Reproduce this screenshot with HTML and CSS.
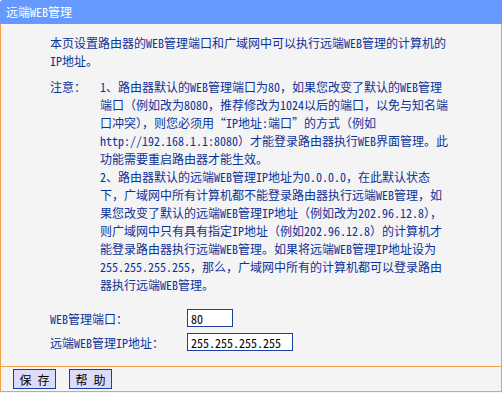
FILE: index.html
```html
<!DOCTYPE html>
<html lang="zh-CN">
<head>
    <meta charset="UTF-8">
    <title>远端WEB管理</title>
    <link rel="stylesheet" href="styles.css">
</head>
<body>
    <div class="title-bar">远端WEB管理</div>
    <div class="content">
        <p class="intro">本页设置路由器的WEB管理端口和广域网中可以执行远端WEB管理的计算机的<br>IP地址。</p>
        <table class="note">
            <tr>
                <td class="note-label">注意：</td>
                <td class="note-text">1、路由器默认的WEB管理端口为80，如果您改变了默认的WEB管理<br>端口（例如改为8080，推荐修改为1024以后的端口，以免与知名端<br>口冲突），则您必须用“IP地址:端口”的方式（例如<br>http://192.168.1.1:8080）才能登录路由器执行WEB界面管理。此<br>功能需要重启路由器才能生效。<br>2、路由器默认的远端WEB管理IP地址为0.0.0.0，在此默认状态<br>下，广域网中所有计算机都不能登录路由器执行远端WEB管理，如<br>果您改变了默认的远端WEB管理IP地址（例如改为202.96.12.8），<br>则广域网中只有具有指定IP地址（例如202.96.12.8）的计算机才<br>能登录路由器执行远端WEB管理。如果将远端WEB管理IP地址设为<br>255.255.255.255，那么，广域网中所有的计算机都可以登录路由<br>器执行远端WEB管理。</td>
            </tr>
        </table>
        <table class="form">
            <tr>
                <td class="form-label">WEB管理端口：</td>
                <td><input class="field field-short" type="text" value="80"></td>
            </tr>
            <tr>
                <td class="form-label">远端WEB管理IP地址：</td>
                <td><input class="field field-long" type="text" value="255.255.255.255"></td>
            </tr>
        </table>
    </div>
    <div class="button-bar">
        <button class="btn">保 存</button>
        <button class="btn">帮 助</button>
    </div>
</body>
</html>
```

FILE: styles.css
```css
body {
    margin: 0;
    padding: 0;
    width: 502px;
    background: #f4f4f4;
    font-family: "Noto Sans Mono CJK SC", "Noto Sans CJK SC", monospace;
    font-size: 12px;
    color: #0d3299;
}
.title-bar {
    height: 24px;
    line-height: 24px;
    padding-left: 6px;
    background: #6699ff;
    color: #fff;
    font-size: 12px;
    border-top-left-radius: 3px;
}
.content {
    border-left: 1px solid #f4a046;
    border-right: 1px solid #f4a046;
    padding: 10px 0 12px 49px;
}
.intro {
    margin: 0 0 8px 0;
    line-height: 18px;
    white-space: nowrap;
}
table {
    border-collapse: collapse;
}
td {
    padding: 0;
    vertical-align: top;
}
.note {
    line-height: 18px;
}
.note-label {
    width: 50px;
    white-space: nowrap;
}
.note-text {
    white-space: nowrap;
}
.form {
    margin-top: 12px;
}
.form td {
    height: 24px;
    vertical-align: middle;
}
.form-label {
    width: 137px;
    white-space: nowrap;
}
.field {
    box-sizing: border-box;
    height: 18px;
    margin: 0;
    padding: 0 3px;
    border: 1px solid #1d3fa0;
    background: #fff;
    color: #000;
    font-family: "Noto Sans Mono CJK SC", "Noto Sans CJK SC", monospace;
    font-size: 12px;
}
.field-short {
    width: 46px;
}
.field-long {
    width: 106px;
}
.button-bar {
    display: flex;
    gap: 13px;
    height: 24px;
    align-items: center;
    padding-left: 12px;
    border: 1px solid #f4a046;
}
.btn {
    box-sizing: border-box;
    width: 43px;
    height: 20px;
    margin: 0;
    padding: 0;
    border: 1px solid #1d3fa0;
    background: #dcdcfa;
    color: #000;
    font-family: "Noto Sans Mono CJK SC", "Noto Sans CJK SC", monospace;
    font-size: 12px;
}
```
